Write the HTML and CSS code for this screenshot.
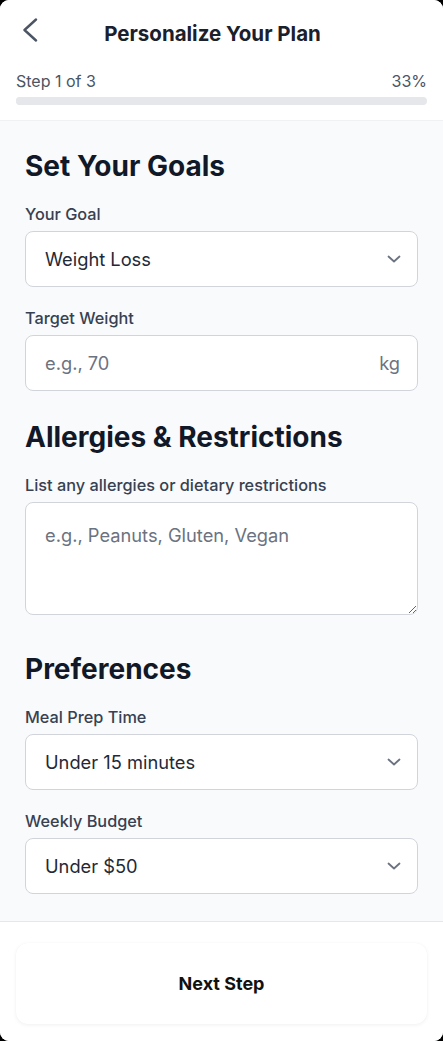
FILE: index.html
```html
<!DOCTYPE html>
<html lang="en">
<head>
<meta charset="utf-8">
<title>Personalize Your Plan</title>
<link rel="stylesheet" href="styles.css">
</head>
<body>
<div class="screen">
  <header class="header">
    <div class="top-row">
      <button class="back" aria-label="Back">
        <svg width="16" height="24" viewBox="0 0 16 24"><polyline points="14,1.5 2.5,12 14,22.5" fill="none" stroke="#4b5563" stroke-width="2.4" stroke-linecap="round" stroke-linejoin="round"/></svg>
      </button>
      <h1 class="title">Personalize Your Plan</h1>
    </div>
    <div class="step-row">
      <span>Step 1 of 3</span>
      <span>33%</span>
    </div>
    <div class="bar"><div class="bar-fill" style="width:33%"></div></div>
  </header>

  <main class="content">
    <section class="section">
      <h2 class="heading">Set Your Goals</h2>
      <div class="field">
        <label class="label">Your Goal</label>
        <div class="select-wrap">
          <select class="control select"><option>Weight Loss</option></select>
          <svg class="chev" width="14" height="8" viewBox="0 0 14 8"><polyline points="1.5,1.5 7,6.5 12.5,1.5" fill="none" stroke="#6b7280" stroke-width="1.8" stroke-linecap="round" stroke-linejoin="round"/></svg>
        </div>
      </div>
      <div class="field">
        <label class="label">Target Weight</label>
        <div class="control input-box">
          <input class="input" type="text" placeholder="e.g., 70">
          <span class="unit">kg</span>
        </div>
      </div>
    </section>

    <section class="section">
      <h2 class="heading">Allergies &amp; Restrictions</h2>
      <div class="field">
        <label class="label">List any allergies or dietary restrictions</label>
        <textarea class="control textarea" placeholder="e.g., Peanuts, Gluten, Vegan"></textarea>
      </div>
    </section>

    <section class="section">
      <h2 class="heading">Preferences</h2>
      <div class="field">
        <label class="label">Meal Prep Time</label>
        <div class="select-wrap">
          <select class="control select"><option>Under 15 minutes</option></select>
          <svg class="chev" width="14" height="8" viewBox="0 0 14 8"><polyline points="1.5,1.5 7,6.5 12.5,1.5" fill="none" stroke="#6b7280" stroke-width="1.8" stroke-linecap="round" stroke-linejoin="round"/></svg>
        </div>
      </div>
      <div class="field">
        <label class="label">Weekly Budget</label>
        <div class="select-wrap">
          <select class="control select"><option>Under $50</option></select>
          <svg class="chev" width="14" height="8" viewBox="0 0 14 8"><polyline points="1.5,1.5 7,6.5 12.5,1.5" fill="none" stroke="#6b7280" stroke-width="1.8" stroke-linecap="round" stroke-linejoin="round"/></svg>
        </div>
      </div>
    </section>
  </main>

  <footer class="footer">
    <button class="next">Next Step</button>
  </footer>
</div>
</body>
</html>
```

FILE: styles.css
```css
* { box-sizing: border-box; }
html, body { margin: 0; padding: 0; background: #000; }
body { font-family: Inter, "Noto Sans", sans-serif; }

.screen {
  width: 443px;
  height: 1041px;
  background: #f9fafb;
  border-radius: 9px;
  overflow: hidden;
  display: flex;
  flex-direction: column;
}

.header {
  background: #fff;
  padding: 18px 16px 15px;
  border-bottom: 1px solid #f0f1f3;
}
.top-row {
  display: flex;
  align-items: flex-start;
  height: 32px;
}
.back {
  width: 24px;
  height: 24px;
  padding: 0 0 0 6px;
  margin: 0;
  border: 0;
  background: none;
  display: flex;
  align-items: flex-start;
}
.back svg { display: block; }
.title {
  flex: 1;
  margin: 0;
  padding-right: 42px;
  text-align: center;
  font-size: 20.5px;
  font-weight: 700;
  color: #1a202c;
  line-height: 32px;
}
.step-row {
  display: flex;
  justify-content: space-between;
  margin-top: 19px;
  font-size: 16px;
  line-height: 24px;
  color: #4b5563;
}
.bar {
  margin-top: 4px;
  height: 8px;
  border-radius: 4px;
  background: #e5e7eb;
  overflow: hidden;
}
.bar-fill { height: 100%; background: #e5e7eb; }

.content {
  flex: 1;
  padding: 27px 25px 0 25px;
  display: flex;
  flex-direction: column;
  gap: 28px;
}
.section { display: flex; flex-direction: column; gap: 20px; }
.section .field + .field { margin-top: 1px; }
.heading {
  margin: 0;
  font-size: 28px;
  line-height: 36px;
  font-weight: 700;
  color: #111827;
}
.field { display: flex; flex-direction: column; gap: 7px; }
.label {
  font-size: 16.3px;
  line-height: 20px;
  font-weight: 500;
  color: #374151;
}
.control {
  width: 100%;
  border: 1px solid #d1d5db;
  border-radius: 8px;
  background: #fff;
  font-family: inherit;
  font-size: 18.3px;
  color: #1f2937;
}
.select-wrap { position: relative; }
.select {
  appearance: none;
  -webkit-appearance: none;
  height: 56px;
  padding: 0 40px 0 19px;
  display: block;
  outline: none;
}
.chev {
  position: absolute;
  right: 17px;
  top: 24px;
  pointer-events: none;
}
.input-box {
  height: 56px;
  display: flex;
  align-items: center;
  padding: 0 17px 0 19px;
}
.input {
  flex: 1;
  min-width: 0;
  border: 0;
  outline: none;
  background: transparent;
  font-family: inherit;
  font-size: 18.3px;
  color: #1f2937;
  padding: 0;
}
.input::placeholder, .textarea::placeholder { color: #6b7280; }
.unit { font-size: 18.3px; color: #6b7280; }
.textarea {
  display: block;
  height: 113px;
  padding: 19px 19px;
  line-height: 26px;
  resize: vertical;
  margin-bottom: 8px;
  outline: none;
}

.footer {
  background: #fff;
  border-top: 1px solid #e5e7eb;
  padding: 21px 16px 17px;
}
.next {
  width: 100%;
  height: 81px;
  border: 0;
  border-radius: 12px;
  background: #fff;
  box-shadow: 0 1px 4px rgba(0,0,0,0.06), 0 0 1px rgba(0,0,0,0.04);
  font-family: inherit;
  font-size: 18px;
  font-weight: 700;
  color: #111;
}
```
